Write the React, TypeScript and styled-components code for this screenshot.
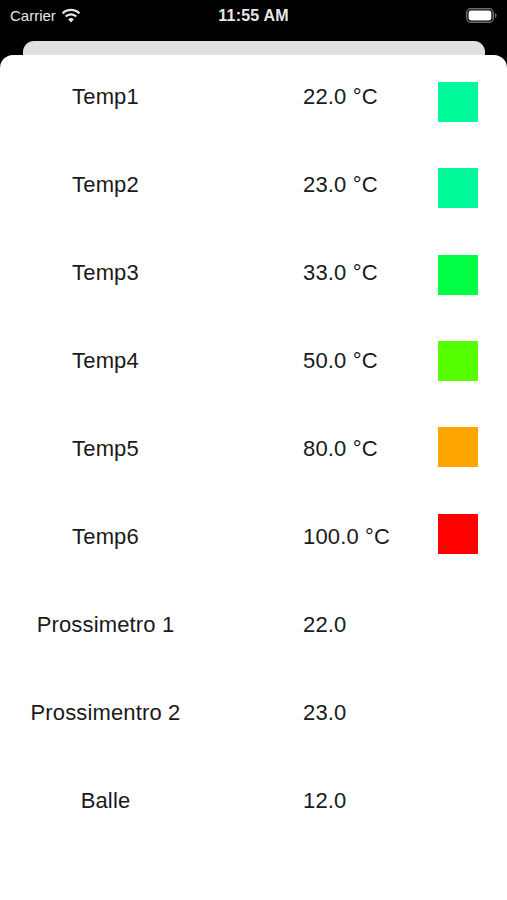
import styled, { createGlobalStyle } from 'styled-components';

const GlobalStyle = createGlobalStyle`
  html, body {
    margin: 0;
    padding: 0;
    background: #000;
  }
  body {
    font-family: 'Liberation Sans', Arial, sans-serif;
  }
`;

const Screen = styled.div`
  width: 507px;
  min-height: 900px;
  background: #000;
  display: flex;
  flex-direction: column;
`;

const StatusBar = styled.div`
  height: 41px;
  display: grid;
  grid-template-columns: 1fr auto 1fr;
  align-items: center;
  padding: 0 10px 10px 10px;
  color: #e8e8e8;
  box-sizing: border-box;
`;

const Carrier = styled.div`
  display: flex;
  align-items: center;
  gap: 5px;
  font-size: 15px;
`;

const Clock = styled.div`
  font-size: 16px;
  font-weight: 700;
  letter-spacing: 0.2px;
`;

const BatteryWrap = styled.div`
  justify-self: end;
  display: flex;
  align-items: center;
`;

const BackCard = styled.div`
  height: 14px;
  margin: 0 22px 0 23px;
  background: #e0e0e0;
  border-radius: 11px 11px 0 0;
`;

const Sheet = styled.div`
  flex: 1;
  background: #fff;
  border-radius: 13px 13px 0 0;
`;

const List = styled.div`
  margin-top: -2px;
  display: flex;
  flex-direction: column;
`;

const Row = styled.div`
  height: 88px;
  display: grid;
  grid-template-columns: 211px 1fr 40px;
  padding-right: 29px;
  align-items: center;
  font-size: 22px;
  letter-spacing: 0.15px;
  color: #1a1a1a;
`;

const Name = styled.div`
  text-align: center;
`;

const Value = styled.div`
  padding-left: 92px;
`;

// the swatches creep up a little on each row in the original
const Swatch = styled.div<{ $color: string; $index: number }>`
  width: 40px;
  height: 40px;
  align-self: start;
  margin-top: ${(p) => 29 - p.$index * 1.7}px;
  background: ${(p) => p.$color};
`;

interface ISensor {
  name: string;
  value: string;
  color?: string;
}

const sensors: ISensor[] = [
  { name: 'Temp1', value: '22.0 °C', color: '#00fa9a' },
  { name: 'Temp2', value: '23.0 °C', color: '#00fa9a' },
  { name: 'Temp3', value: '33.0 °C', color: '#00ff44' },
  { name: 'Temp4', value: '50.0 °C', color: '#55ff00' },
  { name: 'Temp5', value: '80.0 °C', color: '#ffa500' },
  { name: 'Temp6', value: '100.0 °C', color: '#ff0000' },
  { name: 'Prossimetro 1', value: '22.0' },
  { name: 'Prossimentro 2', value: '23.0' },
  { name: 'Balle', value: '12.0' },
];

const Wifi = () => (
  <svg width="20" height="15" viewBox="0 0 20 15">
    <path d="M10 14.5 L7.2 11.4 A4 4 0 0 1 12.8 11.4 Z" fill="#e8e8e8" />
    <path
      d="M4.6 8.6 A7.6 7.6 0 0 1 15.4 8.6"
      stroke="#e8e8e8"
      strokeWidth="2.2"
      fill="none"
    />
    <path
      d="M1.6 5.4 A12 12 0 0 1 18.4 5.4"
      stroke="#e8e8e8"
      strokeWidth="2.2"
      fill="none"
    />
  </svg>
);

const Battery = () => (
  <svg width="31" height="15" viewBox="0 0 31 15">
    <rect x="0.75" y="0.75" width="26.5" height="13.5" rx="4" fill="none" stroke="#6b6b6b" strokeWidth="1.5" />
    <rect x="2.6" y="2.6" width="22.8" height="9.8" rx="2.4" fill="#fff" />
    <path d="M28.8 5 Q30.6 5.4 30.6 7.5 Q30.6 9.6 28.8 10 Z" fill="#6b6b6b" />
  </svg>
);

const App = () => {
  return (
    <Screen>
      <GlobalStyle />
      <StatusBar>
        <Carrier>
          Carrier
          <Wifi />
        </Carrier>
        <Clock>11:55 AM</Clock>
        <BatteryWrap>
          <Battery />
        </BatteryWrap>
      </StatusBar>
      <BackCard />
      <Sheet>
        <List>
          {sensors.map((s, i) => (
            <Row key={s.name}>
              <Name>{s.name}</Name>
              <Value>{s.value}</Value>
              {s.color && <Swatch $color={s.color} $index={i} />}
            </Row>
          ))}
        </List>
      </Sheet>
    </Screen>
  );
};

export default App;
